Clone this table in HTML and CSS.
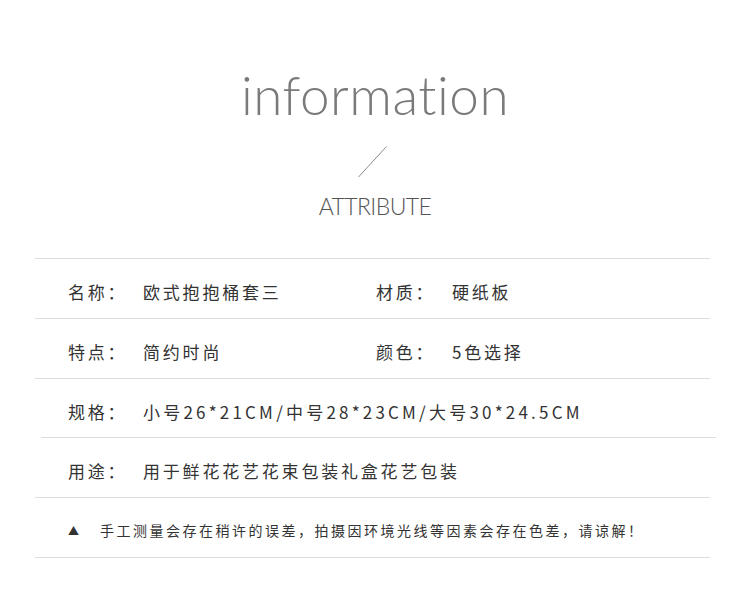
FILE: index.html
```html
<!DOCTYPE html>
<html lang="zh">
<head>
<meta charset="utf-8">
<link rel="stylesheet" href="styles.css">
</head>
<body>
<div class="page">
  <header class="head">
    <h1 class="title">information</h1>
    <svg class="slash" width="30" height="32" viewBox="0 0 30 32"><line x1="28.5" y1="0.5" x2="0.5" y2="31" stroke="#8a8a8a" stroke-width="1"/></svg>
    <div class="sub">ATTRIBUTE</div>
  </header>
  <section class="table">
    <div class="rule"></div>
    <div class="row">
      <span class="label">名称：</span><span class="value">欧式抱抱桶套三</span>
      <span class="label">材质：</span><span class="value">硬纸板</span>
    </div>
    <div class="rule"></div>
    <div class="row">
      <span class="label">特点：</span><span class="value">简约时尚</span>
      <span class="label">颜色：</span><span class="value">5色选择</span>
    </div>
    <div class="rule"></div>
    <div class="row row--short">
      <span class="label">规格：</span><span class="value wide spec">小号26*21CM/中号28*23CM/大号30*24.5CM</span>
    </div>
    <div class="rule rule--shift"></div>
    <div class="row">
      <span class="label">用途：</span><span class="value wide">用于鲜花花艺花束包装礼盒花艺包装</span>
    </div>
    <div class="rule"></div>
    <div class="row note">
      <span class="tri">▲</span><span class="note-text">手工测量会存在稍许的误差，拍摄因环境光线等因素会存在色差，请谅解！</span>
    </div>
    <div class="rule"></div>
  </section>
</div>
</body>
</html>
```

FILE: styles.css
```css
* { box-sizing: border-box; }
html, body { margin: 0; padding: 0; background: #fff; }
body { font-family: "Noto Sans CJK SC", "Noto Sans", sans-serif; color: #333; }
.page { width: 750px; height: 595px; overflow: hidden; }

.head { display: flex; flex-direction: column; align-items: center; padding-top: 64px; }
.title {
  margin: 0;
  font-family: "Lato", "DejaVu Sans", sans-serif;
  font-weight: 300;
  font-size: 53px;
  line-height: 62px;
  height: 62px;
  color: #7a7a7a;
  letter-spacing: 0.5px;
}
.slash { display: block; margin-top: 20px; margin-left: -4px; }
.sub {
  margin-top: 16px;
  font-family: "Lato", "DejaVu Sans", sans-serif;
  font-weight: 300;
  font-size: 23px;
  line-height: 24px;
  color: #555;
  letter-spacing: -0.6px;
}

.table { margin: 40px 40px 0 35px; }
.rule { height: 1px; background: #dcdce3; }
.rule--shift { margin-left: 6px; margin-right: -6px; }
.row {
  display: grid;
  grid-template-columns: 75px 233px 76px 1fr;
  align-items: center;
  height: 59px;
  padding-top: 6px;
  padding-left: 33px;
  font-size: 17px;
  letter-spacing: 2.8px;
  color: #333;
}
.row--short { height: 58px; }
.value.wide { grid-column: 2 / 5; }
.value.spec { letter-spacing: 3.2px; }
.note { display: flex; padding-top: 4px; font-size: 14px; letter-spacing: 2.5px; }
.tri { font-size: 11px; width: 32px; color: #333; }
.note-text { color: #333; }
```
